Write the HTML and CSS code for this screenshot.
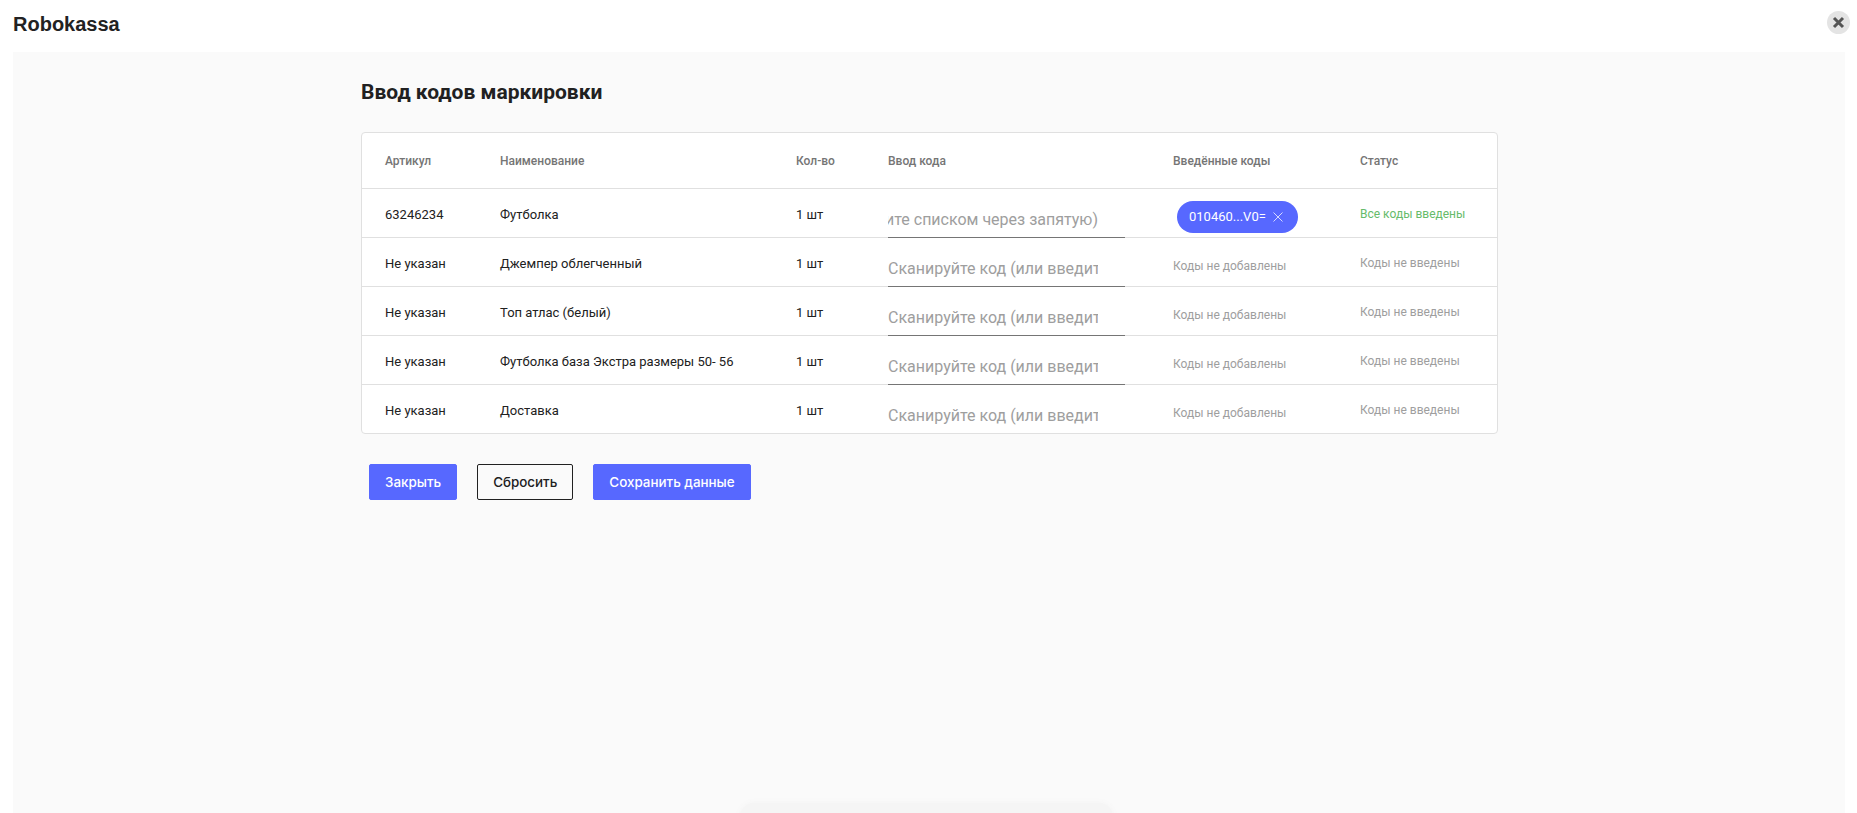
FILE: index.html
```html
<!DOCTYPE html>
<html lang="ru">
<head>
  <meta charset="UTF-8">
  <title>Robokassa - Ввод кодов маркировки</title>
  <link rel="stylesheet" href="styles.css">
</head>
<body>
  <header class="cabecera">
    <div class="marca">Robokassa</div>
    <button class="cerrar" aria-label="Закрыть">
      <svg width="13" height="13" viewBox="0 0 13 13"><path d="M2 2l9 9M11 2l-9 9" stroke="#555" stroke-width="3" fill="none"/></svg>
    </button>
  </header>

  <main class="panel">
    <div class="contenido">
      <h1 class="titulo">Ввод кодов маркировки</h1>

      <div class="tabla">
        <div class="fila fila-cabecera">
          <div>Артикул</div>
          <div>Наименование</div>
          <div>Кол-во</div>
          <div>Ввод кода</div>
          <div>Введённые коды</div>
          <div>Статус</div>
        </div>

        <div class="fila">
          <div>63246234</div>
          <div>Футболка</div>
          <div>1 шт</div>
          <input class="campo campo-final" placeholder="Сканируйте код (или введите списком через запятую)&lrm;">
          <div class="codigos">
            <span class="pastilla">010460...V0=
              <svg width="12" height="12" viewBox="0 0 12 12"><path d="M1.5 1.5l9 9M10.5 1.5l-9 9" stroke="#d5d9ff" stroke-width="1" fill="none"/></svg>
            </span>
          </div>
          <div class="estado estado-ok">Все коды введены</div>
        </div>

        <div class="fila">
          <div>Не указан</div>
          <div>Джемпер облегченный</div>
          <div>1 шт</div>
          <input class="campo" placeholder="Сканируйте код (или введите списком через запятую)">
          <div class="codigos vacio">Коды не добавлены</div>
          <div class="estado">Коды не введены</div>
        </div>

        <div class="fila">
          <div>Не указан</div>
          <div>Топ атлас (белый)</div>
          <div>1 шт</div>
          <input class="campo" placeholder="Сканируйте код (или введите списком через запятую)">
          <div class="codigos vacio">Коды не добавлены</div>
          <div class="estado">Коды не введены</div>
        </div>

        <div class="fila">
          <div>Не указан</div>
          <div>Футболка база Экстра размеры 50- 56</div>
          <div>1 шт</div>
          <input class="campo" placeholder="Сканируйте код (или введите списком через запятую)">
          <div class="codigos vacio">Коды не добавлены</div>
          <div class="estado">Коды не введены</div>
        </div>

        <div class="fila fila-ultima">
          <div>Не указан</div>
          <div>Доставка</div>
          <div>1 шт</div>
          <input class="campo" placeholder="Сканируйте код (или введите списком через запятую)">
          <div class="codigos vacio">Коды не добавлены</div>
          <div class="estado">Коды не введены</div>
        </div>
      </div>

      <div class="botones">
        <button class="boton">Закрыть</button>
        <button class="boton boton-borde">Сбросить</button>
        <button class="boton">Сохранить данные</button>
      </div>
    </div>

    <div class="sombra"></div>
  </main>
</body>
</html>
```

FILE: styles.css
```css
html, body {
  margin: 0;
  padding: 0;
  height: 100%;
  overflow: hidden;
  background: #ffffff;
  font-family: Roboto, sans-serif;
  color: #212121;
}

body {
  display: flex;
  flex-direction: column;
}

.cabecera {
  flex: none;
  height: 52px;
  display: flex;
  align-items: center;
  justify-content: space-between;
  padding: 0 7px 8px 13px;
  box-sizing: border-box;
}

.marca {
  font-family: "Liberation Sans", sans-serif;
  font-weight: bold;
  font-size: 20px;
  margin-top: 5px;
  color: #222222;
}

.cerrar {
  width: 23px;
  height: 23px;
  padding: 0;
  border: 0;
  border-radius: 50%;
  background: #e4e4e4;
  display: flex;
  align-items: center;
  justify-content: center;
}

.panel {
  position: relative;
  flex: 1;
  margin: 0 12px 0 13px;
  background: #fafafa;
  overflow: hidden;
}

.contenido {
  width: 1137px;
  margin-left: 348px;
}

.titulo {
  margin: 28px 0 27px;
  font-size: 21px;
  line-height: 25px;
  font-weight: 700;
  color: #212121;
}

.tabla {
  background: #ffffff;
  border: 1px solid #e0e0e0;
  border-radius: 4px;
}

.fila {
  display: grid;
  grid-template-columns: 115px 296px 92px 285px 187px 1fr;
  height: 49px;
  padding: 2px 0 0 23px;
  box-sizing: border-box;
  border-top: 1px solid #e0e0e0;
  align-items: center;
  font-size: 13px;
  color: #212121;
}

.fila-cabecera {
  height: 55px;
  padding-top: 0;
  border-top: 0;
  font-size: 12px;
  font-weight: 500;
  color: #757575;
}

/* el texto largo se corta a la derecha, como un input de verdad */
.campo {
  align-self: end;
  width: 237px;
  height: 33px;
  padding: 0 27px 3px 0;
  margin-bottom: -1px;
  box-sizing: border-box;
  border: 0;
  border-bottom: 1px solid #757575;
  border-radius: 0;
  outline: none;
  background: transparent;
  font-family: Roboto, sans-serif;
  font-size: 16px;
  line-height: 24px;
}

.campo::placeholder {
  color: #9e9e9e;
  opacity: 1;
}

/* primera fila: se ve el final del texto */
.campo-final {
  direction: rtl;
}

.fila-ultima .campo {
  border-bottom-color: transparent;
}

.pastilla {
  display: inline-flex;
  align-items: center;
  gap: 6px;
  height: 32px;
  width: 121px;
  margin: 5px 0 0 4px;
  padding-left: 12px;
  box-sizing: border-box;
  border-radius: 16px;
  background: #5768ff;
  color: #ffffff;
  font-size: 13px;
  white-space: nowrap;
}

.vacio {
  font-size: 12px;
  color: #9e9e9e;
  padding-top: 6px;
}

.estado {
  font-size: 12px;
  color: #9e9e9e;
}

.estado-ok {
  color: #66bb6a;
}

.botones {
  display: flex;
  gap: 20px;
  margin: 30px 0 0 8px;
}

.boton {
  height: 36px;
  padding: 0 15px;
  border: 1px solid #5768ff;
  border-radius: 2px;
  background: #5768ff;
  color: #ffffff;
  font-family: Inter, Roboto, sans-serif;
  font-size: 13.4px;
  font-weight: 500;
}

.boton-borde {
  background: transparent;
  border-color: #212121;
  color: #212121;
}

.sombra {
  position: absolute;
  left: 727px;
  bottom: -40px;
  width: 373px;
  height: 50px;
  border-radius: 14px;
  background: #f5f5f5;
  box-shadow: 0 0 6px #f3f3f3;
}
```
